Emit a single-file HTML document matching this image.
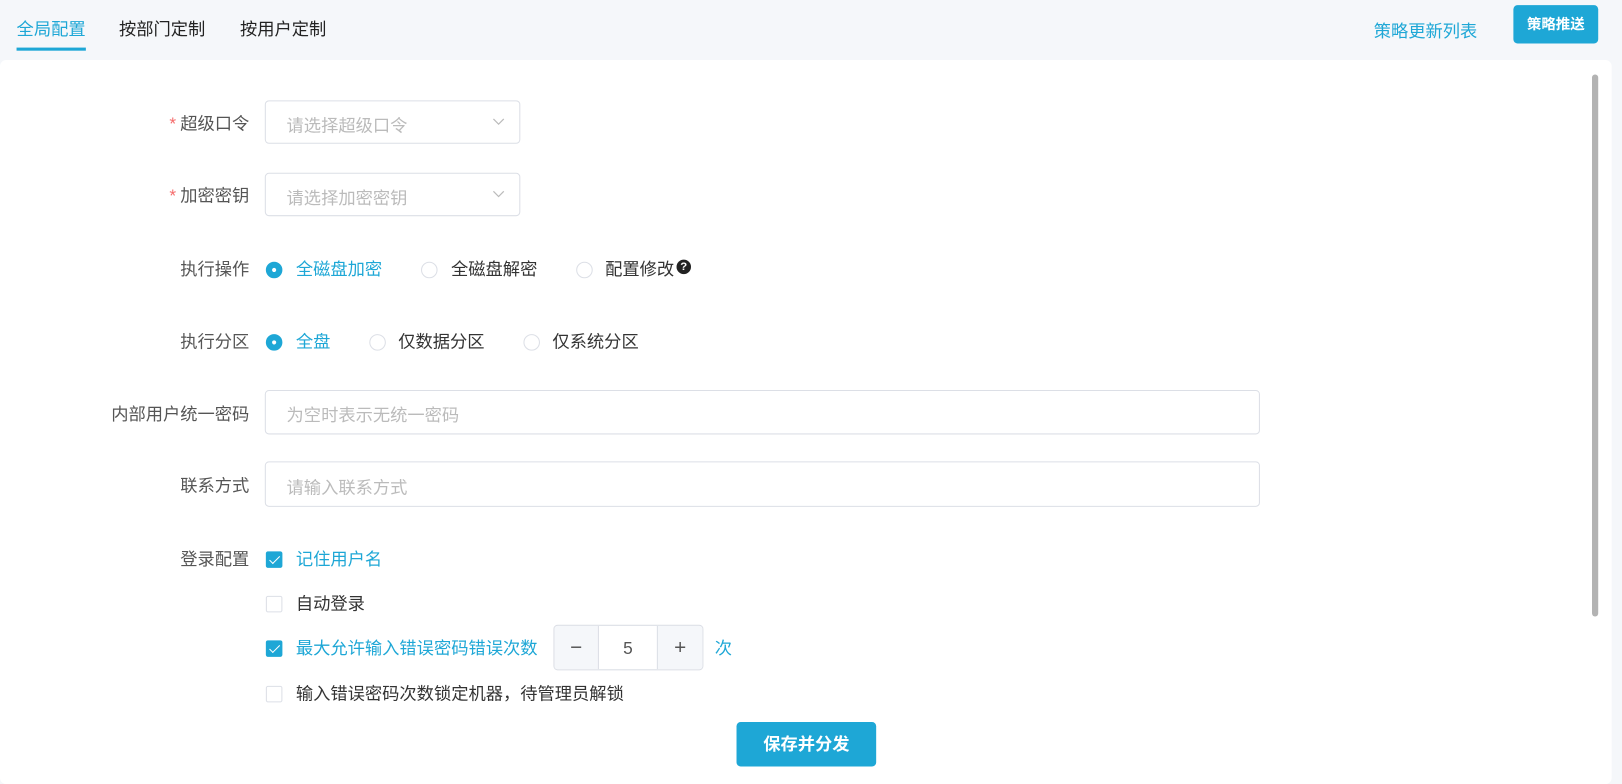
<!DOCTYPE html>
<html><head><meta charset="utf-8"><style>
*{box-sizing:border-box;margin:0;padding:0}
html,body{width:1622px;height:779px;overflow:hidden;background:#f5f7fa}
#w{position:absolute;left:0;top:0;width:1568px;height:753px;transform:scale(1.03444);transform-origin:0 0;font-family:"Liberation Sans","Noto Sans CJK SC",sans-serif;font-size:16.7px;color:#333}
.a{position:absolute;white-space:nowrap}
.card{position:absolute;left:0;top:58px;width:1558px;height:700px;background:#fff;border-radius:6px}
.lbl{position:absolute;right:1327px;color:#555;line-height:24px}
.req:before{content:"*";color:#f56c6c;margin-right:4px}
.inp{position:absolute;left:256px;border:1px solid #dcdfe6;border-radius:4px;color:#bbb;padding-left:20px;padding-top:3px;display:flex;align-items:center}
.radio{position:absolute;width:16px;height:16px;border-radius:50%;border:1px solid #dcdfe6;background:#fff}
.radio.on{background:#1ea7d6;border-color:#1ea7d6}
.radio.on:after{content:"";position:absolute;left:5px;top:5px;width:4px;height:4px;border-radius:50%;background:#fff}
.cb{position:absolute;left:257px;width:16px;height:16px;border:1px solid #dcdfe6;border-radius:2px;background:#fff}
.cb.on{background:#1ea7d6;border-color:#1ea7d6}
.cb.on:after{content:"";position:absolute;left:5px;top:1px;width:4px;height:9px;border:solid #fff;border-width:0 1.5px 1.5px 0;transform:rotate(45deg)}
.t{position:absolute;line-height:24px}
.blue{color:#1ea7d6}
</style></head><body><div id="w">
<div class="a blue" style="left:16px;top:15px">全局配置</div>
<div class="a" style="left:16px;top:46px;width:67px;height:3px;background:#1ea7d6"></div>
<div class="a" style="left:115px;top:15px;color:#222">按部门定制</div>
<div class="a" style="left:232px;top:15px;color:#222">按用户定制</div>
<div class="a blue" style="left:1328px;top:17px">策略更新列表</div>
<div class="a" style="left:1463px;top:5px;width:82px;height:37px;background:#1ea7d6;border-radius:4px;color:#fff;font-size:14px;font-weight:bold;text-align:center;line-height:37px">策略推送</div>
<div class="card"></div>
<div class="a" style="left:1539px;top:72px;width:6px;height:524px;background:#b3b3b3;border-radius:3px"></div>

<div class="lbl req" style="top:108px">超级口令</div>
<div class="inp" style="top:97px;width:247px;height:42px">请选择超级口令<svg style="position:absolute;right:14px;top:16px" width="12" height="8"><path d="M1 1l5 5 5-5" fill="none" stroke="#bbb" stroke-width="1.2"/></svg></div>
<div class="lbl req" style="top:178px">加密密钥</div>
<div class="inp" style="top:167px;width:247px;height:42px">请选择加密密钥<svg style="position:absolute;right:14px;top:16px" width="12" height="8"><path d="M1 1l5 5 5-5" fill="none" stroke="#bbb" stroke-width="1.2"/></svg></div>

<div class="lbl" style="top:249px">执行操作</div>
<div class="radio on" style="left:257px;top:253px"></div><div class="t blue" style="left:286px;top:249px">全磁盘加密</div>
<div class="radio" style="left:407px;top:253px"></div><div class="t" style="left:436px;top:249px">全磁盘解密</div>
<div class="radio" style="left:557px;top:253px"></div><div class="t" style="left:585px;top:249px">配置修改</div>
<div class="a" style="left:654px;top:251px;width:14px;height:14px;border-radius:50%;background:#222;color:#fff;font-size:11px;font-weight:bold;text-align:center;line-height:14px">?</div>

<div class="lbl" style="top:319px">执行分区</div>
<div class="radio on" style="left:257px;top:323px"></div><div class="t blue" style="left:286px;top:319px">全盘</div>
<div class="radio" style="left:357px;top:323px"></div><div class="t" style="left:385px;top:319px">仅数据分区</div>
<div class="radio" style="left:506px;top:323px"></div><div class="t" style="left:534px;top:319px">仅系统分区</div>

<div class="lbl" style="top:389px">内部用户统一密码</div>
<div class="inp" style="top:377px;width:962px;height:43px">为空时表示无统一密码</div>
<div class="lbl" style="top:458px">联系方式</div>
<div class="inp" style="top:446px;width:962px;height:44px">请输入联系方式</div>

<div class="lbl" style="top:529px">登录配置</div>
<div class="cb on" style="top:533px"></div><div class="t blue" style="left:286px;top:529px">记住用户名</div>
<div class="cb" style="top:576px"></div><div class="t" style="left:286px;top:572px">自动登录</div>
<div class="cb on" style="top:619px"></div><div class="t blue" style="left:286px;top:615px">最大允许输入错误密码错误次数</div>
<div class="a" style="left:535px;top:604px;width:145px;height:44px;border:1px solid #dcdfe6;border-radius:4px;overflow:hidden">
<div class="a" style="left:0;top:0;width:43px;height:42px;background:#f5f7fa;border-right:1px solid #dcdfe6;text-align:center;line-height:42px;font-size:20px;color:#555">−</div>
<div class="a" style="left:43px;top:0;width:56px;height:42px;text-align:center;line-height:44px;color:#555">5</div>
<div class="a" style="right:0;top:0;width:44px;height:42px;background:#f5f7fa;border-left:1px solid #dcdfe6;text-align:center;line-height:42px;font-size:20px;color:#555">+</div>
</div>
<div class="t blue" style="left:691px;top:615px">次</div>
<div class="cb" style="top:663px"></div><div class="t" style="left:286px;top:659px">输入错误密码次数锁定机器，待管理员解锁</div>

<div class="a" style="left:712px;top:698px;width:135px;height:43px;background:#1ea7d6;border-radius:4px;color:#fff;font-weight:bold;text-align:center;line-height:44px">保存并分发</div>
</div></body></html>
